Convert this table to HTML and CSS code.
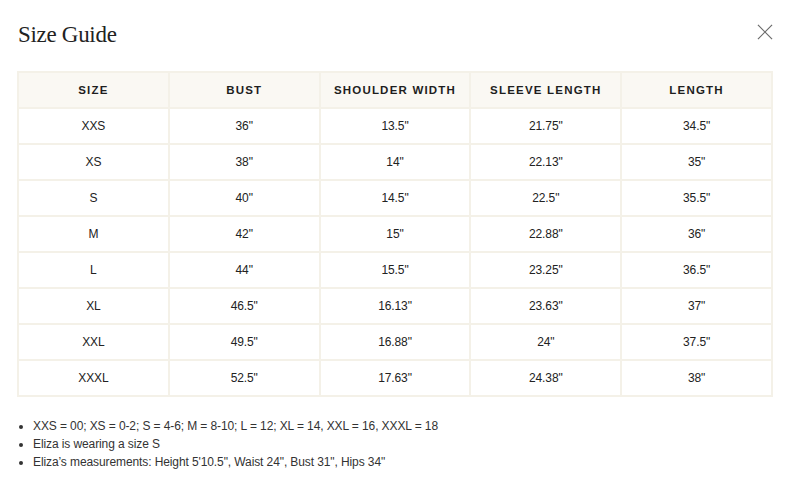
FILE: index.html
```html
<!DOCTYPE html>
<html>
<head>
<meta charset="utf-8">
<link rel="stylesheet" href="styles.css">
</head>
<body>
<div class="modal">
  <div class="head">
    <h1 class="title">Size Guide</h1>
    <button class="close" aria-label="Close">
      <svg width="17" height="17" viewBox="0 0 17 17"><path d="M1 1L16 16M16 1L1 16" stroke="#6b6b6b" stroke-width="1.3" fill="none"/></svg>
    </button>
  </div>
  <table class="sizes">
    <thead>
      <tr><th>SIZE</th><th>BUST</th><th>SHOULDER WIDTH</th><th>SLEEVE LENGTH</th><th>LENGTH</th></tr>
    </thead>
    <tbody>
      <tr><td>XXS</td><td>36"</td><td>13.5"</td><td>21.75"</td><td>34.5"</td></tr>
      <tr><td>XS</td><td>38"</td><td>14"</td><td>22.13"</td><td>35"</td></tr>
      <tr><td>S</td><td>40"</td><td>14.5"</td><td>22.5"</td><td>35.5"</td></tr>
      <tr><td>M</td><td>42"</td><td>15"</td><td>22.88"</td><td>36"</td></tr>
      <tr><td>L</td><td>44"</td><td>15.5"</td><td>23.25"</td><td>36.5"</td></tr>
      <tr><td>XL</td><td>46.5"</td><td>16.13"</td><td>23.63"</td><td>37"</td></tr>
      <tr><td>XXL</td><td>49.5"</td><td>16.88"</td><td>24"</td><td>37.5"</td></tr>
      <tr><td>XXXL</td><td>52.5"</td><td>17.63"</td><td>24.38"</td><td>38"</td></tr>
    </tbody>
  </table>
  <ul class="notes">
    <li>XXS = 00; XS = 0-2; S = 4-6; M = 8-10; L = 12; XL = 14, XXL = 16, XXXL = 18</li>
    <li>Eliza is wearing a size S</li>
    <li>Eliza’s measurements: Height 5'10.5", Waist 24", Bust 31", Hips 34"</li>
  </ul>
</div>
</body>
</html>
```
FILE: styles.css
```css
html, body { margin: 0; padding: 0; background: #fff; }
body { font-family: "Liberation Sans", Arial, sans-serif; color: #222; }
.modal { padding: 20px 18px 0 17px; }
.head { display: flex; justify-content: space-between; align-items: flex-start; height: 51px; }
.title {
  margin: 0; padding-left: 1px;
  font-family: "Liberation Serif", "Times New Roman", serif;
  font-weight: 400; font-size: 23px; line-height: 30px; color: #222;
  letter-spacing: -0.3px;
}
.close { border: 0; background: none; padding: 0; margin: 4px 0 0 0; width: 16px; height: 16px; cursor: pointer; }
.close svg { display: block; width: 16px; height: 16px; }
.sizes { border-collapse: collapse; width: 756px; table-layout: fixed; }
.sizes th, .sizes td { border: 2px solid #f4f1e8; text-align: center; height: 34px; padding: 0; }
.sizes th {
  background: #faf8f3; font-size: 11.5px; font-weight: 700; letter-spacing: 1.2px; color: #1e1e1e;
}
.sizes td { font-size: 12px; color: #222; letter-spacing: -0.1px; }
.notes { margin: 20px 0 0 0; padding: 0 0 0 16px; font-size: 12px; line-height: 18px; color: #333; letter-spacing: -0.1px; }
.notes li { padding-left: 0; }
```
